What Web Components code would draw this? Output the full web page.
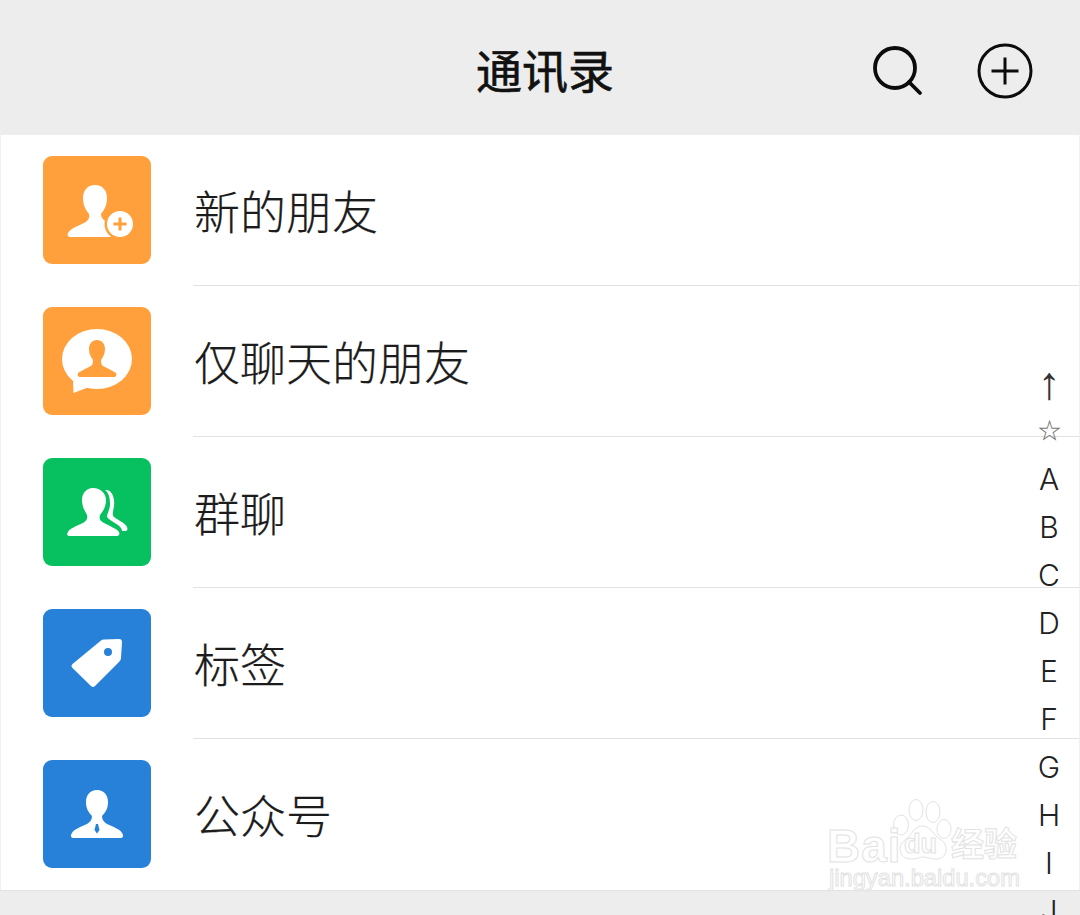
<!DOCTYPE html>
<html lang="zh">
<head>
<meta charset="utf-8">
<title>通讯录</title>
<style>
  html, body { margin: 0; height: 915px; overflow: hidden; background: #fff; }
  body { position: relative; display: flex; flex-direction: column; font-family: "Noto Sans CJK SC", "Liberation Sans", sans-serif; }
</style>
</head>
<body>
<template id="tpl-header">
  <style>
    :host { display: grid; grid-template-columns: 1fr auto 1fr; align-items: center; height: 135px; padding-left: 10px; background: #ededed; box-sizing: border-box; }
    h1 { grid-column: 2; margin: 0; font-size: 46px; line-height: 60px; font-weight: 400; -webkit-text-stroke: 0.6px #111; color: #111; }
    .actions { grid-column: 3; justify-self: end; display: flex; align-items: center; gap: 52px; padding: 6px 46px 0 0; }
    svg { display: block; fill: none; stroke: #0c0c0c; }
  </style>
  <h1><slot></slot></h1>
  <div class="actions">
    <svg width="54" height="56" viewBox="0 0 54 56" stroke-width="3.8"><circle cx="25" cy="25" r="20"/><path d="M39 39 L50 50" stroke-linecap="round"/></svg>
    <svg width="58" height="58" viewBox="0 0 58 58" stroke-width="3"><circle cx="29" cy="29" r="26"/><path d="M15.5 29 H42.5 M29 15.5 V42.5"/></svg>
  </div>
</template>

<template id="tpl-row">
  <style>
    :host { display: flex; align-items: center; height: 151px; padding-left: 42px; box-sizing: border-box; border-left: 1px solid #f1f1f1; border-right: 1px solid #f1f1f1; }
    .tile { width: 108px; height: 108px; flex: none; margin-bottom: 2px; border-radius: 9px; background: var(--tile, #ffa03c); }
    ::slotted(svg) { display: block; width: 108px; height: 108px; }
    .text { flex: 1; align-self: stretch; display: flex; align-items: center; margin-left: 43px; padding-bottom: 3px; box-sizing: border-box; font-size: 46px; font-weight: 300; -webkit-text-stroke: 0.2px #1c1c1c; color: #1c1c1c; position: relative; }
    .text::after { content: ""; position: absolute; left: -1px; right: 0; bottom: 0; border-bottom: 1px solid #e2e2e2; }
    :host([last]) .text::after { display: none; }
  </style>
  <div class="tile"><slot name="icon"></slot></div>
  <div class="text"><slot></slot></div>
</template>

<template id="tpl-index">
  <style>
    :host { position: absolute; top: 359px; right: 7px; width: 48px; display: flex; flex-direction: column; align-items: center; font-family: Inter, "Liberation Sans", sans-serif; font-weight: 300; font-size: 30px; color: #222; }
    ::slotted(span) { display: flex; align-items: center; justify-content: center; height: 48px; line-height: 48px; }
    ::slotted(.arrow) { font-family: "Liberation Sans", sans-serif; font-size: 46px; color: #333; }
    ::slotted(.star) { font-family: "DejaVu Sans", sans-serif; font-size: 25px; color: #777; }
  </style>
  <slot></slot>
</template>

<template id="tpl-mark">
  <style>
    :host { position: absolute; left: 826px; top: 798px; width: 200px; height: 96px; color: #fff; -webkit-text-stroke: 1px #e2e2e2; font-family: "Liberation Sans", sans-serif; font-weight: 700; pointer-events: none; }
    span { position: absolute; white-space: nowrap; line-height: 0.8; }
    .bai { left: 1px; top: 30px; font-size: 46px; letter-spacing: 1px; }
    .du { left: 78px; top: 36px; font-size: 27px; }
    .jy { left: 125px; top: 31px; font-size: 33px; font-family: "Noto Sans CJK SC", sans-serif; }
    .url { left: 3px; top: 71px; font-size: 23.7px; font-weight: 400; }
    svg { position: absolute; left: 66px; top: 0; fill: #fff; stroke: #e2e2e2; stroke-width: 1; }
  </style>
  <svg width="62" height="64" viewBox="0 0 62 64"><ellipse cx="9" cy="27" rx="7.5" ry="10"/><ellipse cx="24" cy="12" rx="7" ry="10.5"/><ellipse cx="41" cy="14" rx="7" ry="10.5"/><ellipse cx="52" cy="31" rx="7" ry="9.5"/><path d="M30 28 C22 28 20 37 13 42 C5 48 7 61 19 61 C25 61 28 59 31 59 C35 59 38 61 45 61 C56 60 57 47 49 42 C41 37 39 28 30 28 Z"/></svg>
  <span class="bai">Bai</span><span class="du">du</span><span class="jy">经验</span><span class="url"><slot></slot></span>
</template>

<contact-header>通讯录</contact-header>

<contact-row tile="#ffa03c">
  <svg slot="icon" viewBox="0 0 108 108" fill="#fff"><path d="M52 29 C44 29 40 35 40 42 C40 50 43 54 46 58 C47 62 45 65 41 67 C35 70 28 72 25 77 C24 80 25 81 28 81 H66 C74 81 72 72 67 68 C62 65 58 63 58 58 C61 54 64 50 64 42 C64 35 60 29 52 29 Z"/><circle cx="77" cy="68" r="15.5" fill="#ffa03c"/><circle cx="77" cy="68" r="13"/><path d="M70.5 68 H83.5 M77 61.5 V74.5" stroke="#ffa03c" stroke-width="3"/></svg>
  新的朋友
</contact-row>
<contact-row tile="#ffa03c">
  <svg slot="icon" viewBox="0 0 108 108" fill="#fff"><ellipse cx="54" cy="52" rx="35" ry="30"/><path d="M30 74 L30.5 86 L46 80 Z"/><path fill="#ffa03c" d="M54 33 C49 33 46 37 46 42 C46 47 48 50 50 53 C50 57 49 59 46 60 C42 62 38 64 35 66 C34 68 35 70 37 70 H71 C73 70 74 68 73 66 C70 64 66 62 62 60 C59 59 58 57 58 53 C60 50 62 47 62 42 C62 37 59 33 54 33 Z"/></svg>
  仅聊天的朋友
</contact-row>
<contact-row tile="#07c160">
  <svg slot="icon" viewBox="0 0 108 108" fill="#fff"><path d="M50 30 C43 30 39 36 39 42 C39 49 42 53 44 57 C45 61 43 63 40 65 C34 68 27 70 25 74 C23 77 25 78 27 78 H74 C76 78 77 76 76 74 C73 70 66 68 61 65 C57 63 56 61 57 57 C60 53 63 49 63 42 C63 36 58 30 50 30 Z"/><path d="M62 32 C69 31 72 40 71 48 C70 54 69 57 71 59 C75 62 82 65 84 69 C85 72 84 73 82 73 L79 73 C79 70 77 69 75 67 C71 64 66 62 64 59 C64 55 67 52 67 46 C67 40 66 35 62 32 Z"/></svg>
  群聊
</contact-row>
<contact-row tile="#2781d8">
  <svg slot="icon" viewBox="0 0 108 108" fill="#fff"><path d="M29.5 55 L58 31.5 Q59 30.5 61 30.5 L76 30 Q79 30 79 33 L78 49 Q78 51 76 53 L52 77 Q50 79 48 77 L29.5 59 Q27.5 57 29.5 55 Z"/><circle cx="65" cy="43" r="4" fill="#2781d8"/></svg>
  标签
</contact-row>
<contact-row tile="#2781d8" last>
  <svg slot="icon" viewBox="0 0 108 108" fill="#fff"><path d="M54 30 C47 30 43 35 43 42 C43 49 46 53 49 56 C49 60 47 62 44 64 C38 67 31 69 29 73 C27 76 28 78 31 78 H77 C80 78 81 76 79 73 C77 69 70 67 64 64 C61 62 59 60 59 56 C62 53 65 49 65 42 C65 35 61 30 54 30 Z"/><path fill="#2781d8" d="M53 64 H55 L56.5 70 L54 73.5 L51.5 70 Z"/></svg>
  公众号
</contact-row>
<page-footer></page-footer>

<index-bar>
  <span class="arrow">↑</span><span class="star">☆</span><span>A</span><span>B</span><span>C</span><span>D</span><span>E</span><span>F</span><span>G</span><span>H</span><span>I</span><span>J</span>
</index-bar>
<baidu-mark>jingyan.baidu.com</baidu-mark>

<script>
  function fromTemplate(el, id) {
    const shadow = el.attachShadow({ mode: 'open' });
    shadow.appendChild(document.getElementById(id).content.cloneNode(true));
    return shadow;
  }

  class ContactHeader extends HTMLElement {
    constructor() { super(); fromTemplate(this, 'tpl-header'); }
  }
  class ContactRow extends HTMLElement {
    constructor() { super(); fromTemplate(this, 'tpl-row'); }
    connectedCallback() { this.style.setProperty('--tile', this.getAttribute('tile')); }
  }
  class IndexBar extends HTMLElement {
    constructor() { super(); fromTemplate(this, 'tpl-index'); }
  }
  class BaiduMark extends HTMLElement {
    constructor() { super(); fromTemplate(this, 'tpl-mark'); }
  }
  class PageFooter extends HTMLElement {
    constructor() {
      super();
      this.attachShadow({ mode: 'open' }).innerHTML = '<style>:host { display: block; flex: 1; background: #ededed; border-top: 1px solid #e2e2e2; }</style>';
    }
  }
  customElements.define('contact-header', ContactHeader);
  customElements.define('contact-row', ContactRow);
  customElements.define('index-bar', IndexBar);
  customElements.define('baidu-mark', BaiduMark);
  customElements.define('page-footer', PageFooter);
</script>
</body>
</html>
